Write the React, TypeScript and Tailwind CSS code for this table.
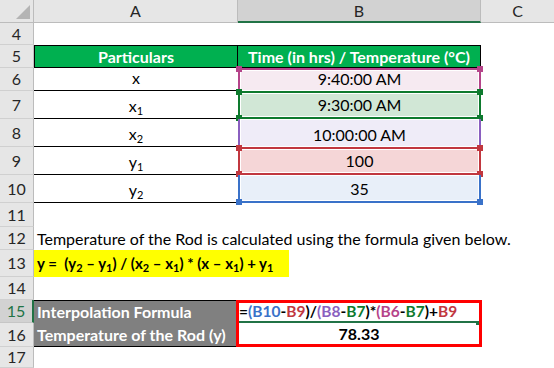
import React from 'react';

const RowHead = ({ n, selected }: { n: number; selected?: boolean }) => (
  <div
    className={
      selected
        ? 'w-[34px] shrink-0 bg-[#d2d2d2] border-b border-[#c6c6c6] border-r-2 border-r-[#217346] flex items-center justify-center text-[#217346]'
        : 'w-[34px] shrink-0 bg-[#e6e6e6] border-b border-[#d0d0d0] border-r border-r-[#bcbcbc] flex items-center justify-center text-[#262626]'
    }
  >
    {n}
  </div>
);

const Handle = ({ pos, color }: { pos: string; color: string }) => (
  <span className={`absolute w-[6px] h-[6px] ${pos} ${color}`} />
);

const Sub = ({ c }: { c: string }) => <sub className="text-[11px]">{c}</sub>;

const refCells = [
  { label: <>x</>, value: '9:40:00 AM', box: 'border-t-2 border-x-2 border-[#b5448a]', fill: 'bg-[#f6eaf1]', handles: [{ pos: '-left-[4px] -top-[4px]', color: 'bg-[#b5448a]' }, { pos: '-right-[4px] -top-[4px]', color: 'bg-[#b5448a]' }], h: 'h-[23px]' },
  { label: <>x<Sub c="1" /></>, value: '9:30:00 AM', box: 'border-2 border-[#0e7a2e]', fill: 'bg-[#d1e7d6]', handles: [{ pos: '-left-[4px] -top-[4px]', color: 'bg-[#0e7a2e]' }, { pos: '-right-[4px] -top-[4px]', color: 'bg-[#0e7a2e]' }, { pos: '-left-[4px] -bottom-[4px]', color: 'bg-[#0e7a2e]' }, { pos: '-right-[4px] -bottom-[4px]', color: 'bg-[#0e7a2e]' }], h: 'h-[28px]' },
  { label: <>x<Sub c="2" /></>, value: '10:00:00 AM', box: 'border-x-2 border-[#8a5fc0]', fill: 'bg-[#efecf8]', handles: [], h: 'h-[28px]' },
  { label: <>y<Sub c="1" /></>, value: '100', box: 'border-2 border-[#c1373f]', fill: 'bg-[#f5d6d7]', handles: [{ pos: '-left-[4px] -top-[4px]', color: 'bg-[#c1373f]' }, { pos: '-right-[4px] -top-[4px]', color: 'bg-[#c1373f]' }, { pos: '-left-[4px] -bottom-[4px]', color: 'bg-[#c1373f]' }, { pos: '-right-[4px] -bottom-[4px]', color: 'bg-[#c1373f]' }], h: 'h-[28px]' },
  { label: <>y<Sub c="2" /></>, value: '35', box: 'border-b-2 border-x-2 border-[#3a72c9]', fill: 'bg-[#e8eff9]', handles: [{ pos: '-left-[4px] -bottom-[4px]', color: 'bg-[#3a72c9]' }, { pos: '-right-[4px] -bottom-[4px]', color: 'bg-[#3a72c9]' }], h: 'h-[28px]' },
];

export default function App() {
  return (
    <div className="w-[554px] h-[368px] overflow-hidden bg-white text-[16px] leading-none text-black font-['Lato','Open_Sans',sans-serif]">
      {/* column headers */}
      <div className="flex h-[23px]">
        <div className="w-[34px] shrink-0 bg-[#e6e6e6] border-b border-r border-[#bcbcbc] relative">
          <span className="absolute right-[3px] bottom-[3px] w-0 h-0 border-l-[14px] border-l-transparent border-b-[14px] border-b-[#b4b4b4]" />
        </div>
        <div className="w-[204px] shrink-0 bg-[#e6e6e6] border-b border-r border-[#bcbcbc] flex items-center justify-center text-[#262626]">A</div>
        <div className="w-[243px] shrink-0 bg-[#d2d2d2] border-b-2 border-b-[#217346] border-r border-r-[#bcbcbc] flex items-center justify-center text-[#262626]">B</div>
        <div className="flex-1 bg-[#e6e6e6] border-b border-[#bcbcbc] flex items-center justify-center text-[#262626]">C</div>
      </div>

      {/* row 4 */}
      <div className="flex h-[22px]">
        <RowHead n={4} />
        <div className="flex-1" />
      </div>

      {/* row 5 */}
      <div className="flex h-[23px]">
        <RowHead n={5} />
        <div className="w-[204px] shrink-0 bg-[#00b050] border border-black flex items-center justify-center text-white font-bold">Particulars</div>
        <div className="w-[243px] shrink-0 bg-[#00b050] border-y border-r border-black flex items-center justify-center text-white font-bold whitespace-nowrap">Time (in hrs) / Temperature (°C)</div>
        <div className="flex-1" />
      </div>

      {/* rows 6-10 */}
      {refCells.map((r, i) => (
        <div key={i} className={`flex ${r.h}`}>
          <RowHead n={6 + i} />
          <div className="w-[204px] shrink-0 border-b border-black flex items-end justify-center pb-[4px]">
            <span>{r.label}</span>
          </div>
          <div className={`w-[243px] shrink-0 relative bg-white p-[1px] ${r.box}`}>
            <div className={`h-full flex items-end justify-center pb-[3px] ${r.fill}`}>{r.value}</div>
            {r.handles.map((h, j) => (
              <Handle key={j} pos={h.pos} color={h.color} />
            ))}
          </div>
          <div className="flex-1" />
        </div>
      ))}

      {/* row 11 */}
      <div className="flex h-[24px]">
        <RowHead n={11} />
        <div className="flex-1" />
      </div>

      {/* row 12 */}
      <div className="flex h-[23px]">
        <RowHead n={12} />
        <div className="flex-1 flex items-end pl-[3px] pb-[3px] whitespace-nowrap">
          Temperature of the Rod is calculated using the formula given below.
        </div>
      </div>

      {/* row 13 */}
      <div className="flex h-[27px]">
        <RowHead n={13} />
        <div className="w-[255px] bg-[#ffff00] flex items-center pl-[3px] font-bold whitespace-nowrap text-[15px]">
          <span>
            y =&nbsp; (y<Sub c="2" /> – y<Sub c="1" />) / (x<Sub c="2" /> – x<Sub c="1" />) * (x – x<Sub c="1" />) + y<Sub c="1" />
          </span>
        </div>
      </div>

      {/* row 14 */}
      <div className="flex h-[23px]">
        <RowHead n={14} />
        <div className="flex-1" />
      </div>

      {/* row 15 */}
      <div className="flex h-[23px]">
        <RowHead n={15} selected />
        <div className="w-[202px] shrink-0 bg-[#808080] border-t border-black flex items-end pl-[3px] pb-[3px] text-white font-bold whitespace-nowrap">Interpolation Formula</div>
        <div className="w-[246px] shrink-0 border-t-[3px] border-x-[3px] border-[#ff0000] relative">
          <div className="h-full border-b-2 border-[#217346] flex items-end pb-[2px] font-bold whitespace-nowrap text-[15.5px]">
            <span>=</span>
            <span className="text-[#3a72c9]">(B10</span>
            <span>-</span>
            <span className="text-[#c1373f]">B9</span>
            <span>)/</span>
            <span className="text-[#8a5fc0]">(B8</span>
            <span>-</span>
            <span className="text-[#0e7a2e]">B7</span>
            <span>)*</span>
            <span className="text-[#b5448a]">(B6</span>
            <span>-</span>
            <span className="text-[#0e7a2e]">B7</span>
            <span>)+</span>
            <span className="text-[#c1373f]">B9</span>
          </div>
          <span className="absolute right-0 bottom-[-2px] w-[3px] h-[4px] bg-[#217346]" />
        </div>
        <div className="flex-1" />
      </div>

      {/* row 16 */}
      <div className="flex h-[24px]">
        <RowHead n={16} />
        <div className="w-[202px] shrink-0 bg-[#808080] border-b border-black flex items-end pl-[3px] pb-[3px] text-white font-bold whitespace-nowrap">Temperature of the Rod (y)</div>
        <div className="w-[246px] shrink-0 border-b-[3px] border-x-[3px] border-[#ff0000] flex items-end justify-center pb-[2px] font-bold">78.33</div>
        <div className="flex-1" />
      </div>

      {/* row 17 */}
      <div className="flex h-[21px]">
        <RowHead n={17} />
        <div className="flex-1" />
      </div>
    </div>
  );
}
